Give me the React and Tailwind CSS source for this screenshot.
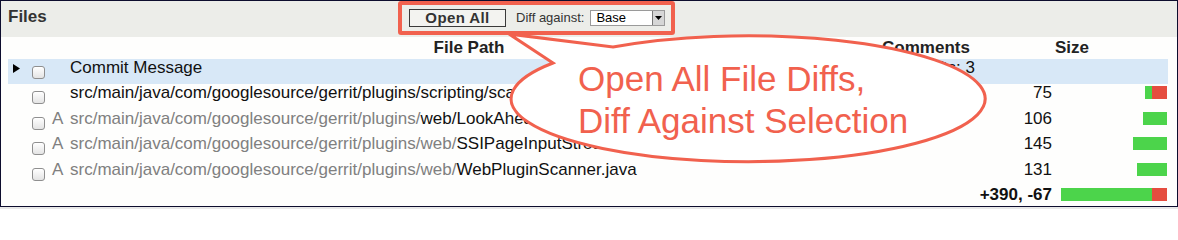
const files = [
  {
    status: "",
    dim: "",
    name: "src/main/java/com/googlesource/gerrit/plugins/scripting/scala/ScalaPluginProvider.java",
    size: "75",
    ins: 7,
    del: 15,
  },
  {
    status: "A",
    dim: "src/main/java/com/googlesource/gerrit/plugins/",
    name: "web/LookAheadFileNamePageResolver.java",
    size: "106",
    ins: 24,
    del: 0,
  },
  {
    status: "A",
    dim: "src/main/java/com/googlesource/gerrit/plugins/web/",
    name: "SSIPageInputStreamFactory.java",
    size: "145",
    ins: 34,
    del: 0,
  },
  {
    status: "A",
    dim: "src/main/java/com/googlesource/gerrit/plugins/web/",
    name: "WebPluginScanner.java",
    size: "131",
    ins: 30,
    del: 0,
  },
];

function Checkbox() {
  return (
    <div className="mt-[7px] ml-[4px] h-[13px] w-[13px] rounded-[3px] border border-[#8f8f8f] bg-gradient-to-b from-white to-[#e4e4e4] shadow-[inset_0_1px_0_#fff]"></div>
  );
}

function Bars({ ins, del }) {
  return (
    <div className="flex w-[112px] justify-end pr-[1px] pt-[2px]">
      {ins > 0 && <div className="h-[13px] bg-[#4cd44b]" style={{ width: ins }}></div>}
      {del > 0 && <div className="h-[13px] bg-[#e54d3f]" style={{ width: del }}></div>}
    </div>
  );
}

export default function App() {
  return (
    <div className="h-[209px] w-[1178px] bg-[#e8e8e8] font-['Liberation_Sans',Arial,sans-serif]">
      <div className="relative h-[207px] overflow-hidden border border-[#0d0d2e] bg-[#fefefd]">
        {/* header bar */}
        <div className="flex h-[36px] bg-[#ecede9]">
          <div className="w-[397px] pl-[7px] pt-[7px] text-[17px] font-bold leading-[18px] text-[#333]">
            Files
          </div>
          <div className="relative z-20 flex h-[34px] w-[277px] items-center rounded-[3px] border-4 border-[#f1614e] pl-[7px]">
            <div className="flex h-[18px] w-[97px] items-center justify-center border border-[#3a3a3a] bg-[#f3f3f0] text-[15px] font-bold tracking-[0.4px] text-[#333]">
              Open All
            </div>
            <span className="ml-[10px] text-[13px] text-[#333]">Diff against:</span>
            <div className="ml-[6px] flex h-[16px] w-[75px] items-center border border-[#9a9a9a] bg-white">
              <span className="flex-1 pl-[5px] text-[13px] leading-[14px] text-black">Base</span>
              <div className="flex h-[14px] w-[12px] items-center justify-center border-l border-[#777] bg-[#d6d6d6]">
                <svg width="7" height="4" viewBox="0 0 7 4">
                  <polygon points="0,0 7,0 3.5,4" fill="#000" />
                </svg>
              </div>
            </div>
          </div>
        </div>

        {/* table */}
        <div className="pl-[7px] pr-[9px] text-[17px] leading-[18px] text-[#111]">
          <div className="flex h-[22px] pt-[2px] font-bold text-[#222]">
            <div className="w-[42px]"></div>
            <div className="w-[826px] pl-[12px] text-center">File Path</div>
            <div className="w-[100px] text-center">Comments</div>
            <div className="w-[192px] text-center">Size</div>
          </div>

          <div className="flex h-[25px] bg-[#d8e8f7]">
            <div className="w-[20px] pl-[5px] pt-[5px]">
              <svg width="7" height="9" viewBox="0 0 7 9">
                <polygon points="0,0 7,4.5 0,9" fill="#000" />
              </svg>
            </div>
            <div className="w-[22px]">
              <Checkbox />
            </div>
            <div className="w-[19px]"></div>
            <div className="w-[807px] pl-[1px]">Commit Message</div>
            <div className="w-[100px] pr-[1px] text-right">drafts: 3</div>
            <div className="w-[80px]"></div>
            <div className="w-[112px]"></div>
          </div>

          {files.map((f) => (
            <div key={f.name} className="flex h-[25.5px]">
              <div className="w-[20px]"></div>
              <div className="w-[22px]">
                <Checkbox />
              </div>
              <div className="w-[19px] pl-[2px] text-[#808080]">{f.status}</div>
              <div className="w-[807px] overflow-hidden whitespace-nowrap pl-[1px]">
                <span className="text-[#808080]">{f.dim}</span>
                <span>{f.name}</span>
              </div>
              <div className="w-[100px]"></div>
              <div className="w-[80px] pr-[4px] text-right">{f.size}</div>
              <Bars ins={f.ins} del={f.del} />
            </div>
          ))}

          <div className="flex h-[20px]">
            <div className="w-[968px]"></div>
            <div className="w-[80px] pr-[4px] text-right font-bold">+390, -67</div>
            <Bars ins={91} del={15} />
          </div>
        </div>

        {/* callout bubble */}
        <svg
          className="pointer-events-none absolute left-[-1px] top-[-1px] z-10"
          width="1178"
          height="207"
          viewBox="0 0 1178 207"
        >
          <path
            d="M553 63 L509 34 L613 47 A237 63 0 1 1 553 63 Z"
            fill="#fff"
            stroke="#f1614e"
            strokeWidth="3"
            strokeLinejoin="miter"
          />
        </svg>
        <div className="pointer-events-none absolute left-[577px] top-[57px] z-10 text-[35px] leading-[42px] text-[#f1614e]">
          <div>Open All File Diffs,</div>
          <div>Diff Against Selection</div>
        </div>
      </div>
    </div>
  );
}
